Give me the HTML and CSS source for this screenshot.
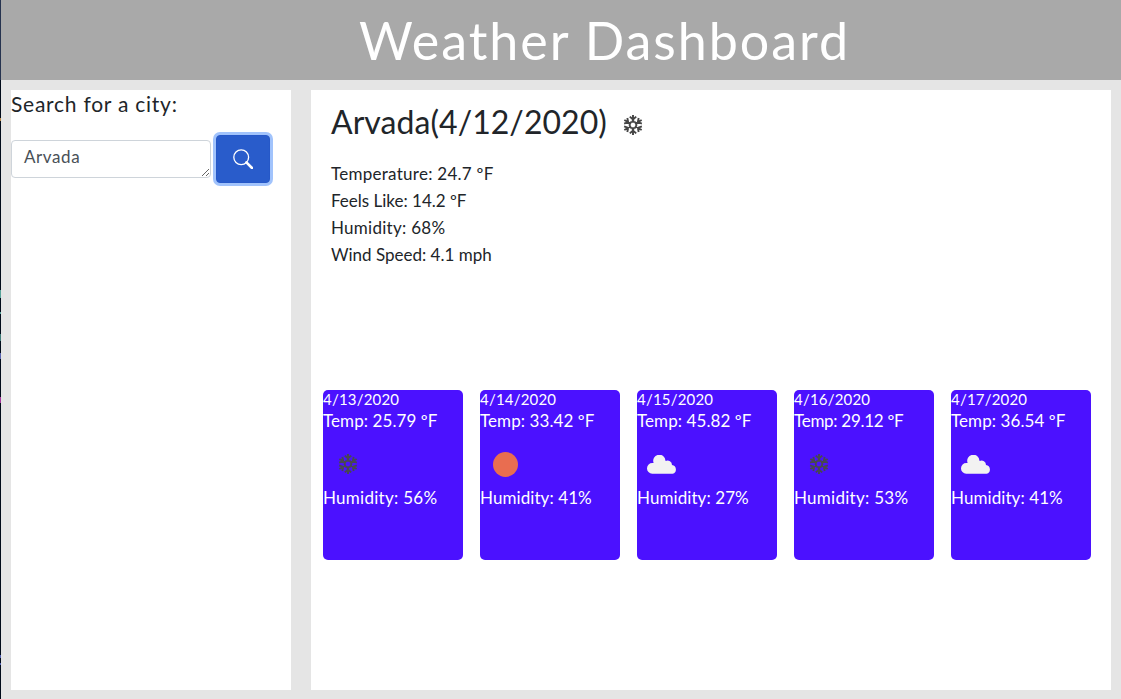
FILE: index.html
```html
<!DOCTYPE html>
<html lang="en">
<head>
<meta charset="utf-8">
<title>Weather Dashboard</title>
<link rel="stylesheet" href="styles.css">
</head>
<body>
<svg class="symbols" aria-hidden="true">
  <symbol id="snow" viewBox="-10 -10 20 20">
    <g id="arms" fill="none" stroke="currentColor" stroke-width="1.9">
      <g id="arm"><path d="M0-2.5V-10M-3.2-8.4 0-5.6 3.2-8.4M-1.8-3.2H1.8"/></g>
      <use href="#arm" transform="rotate(60)"/>
      <use href="#arm" transform="rotate(120)"/>
      <use href="#arm" transform="rotate(180)"/>
      <use href="#arm" transform="rotate(240)"/>
      <use href="#arm" transform="rotate(300)"/>
    </g>
  </symbol>
  <symbol id="cloud" viewBox="0 0 30 19">
    <path fill="#f2f2f2" d="M5.2 18.7A5.2 5.2 0 0 1 5.4 8.1L6.6 8.1A6.2 6.2 0 1 1 18.6 5.9A4.5 4.5 0 0 1 25 10.1A4.4 4.4 0 0 1 25.7 18.7Z"/>
  </symbol>
</svg>
<div class="edge"></div>
<div class="page">
  <header class="banner"><h1>Weather Dashboard</h1></header>
  <main class="content">
    <aside class="search">
      <h2>Search for a city:</h2>
      <form class="search-form">
        <textarea class="city" rows="1">Arvada</textarea>
        <button class="go" type="button" aria-label="Search">
          <svg width="20" height="20" viewBox="0 0 20 20" fill="none" stroke="#fff"><circle cx="8.2" cy="8.2" r="7.4" stroke-width="1.3"/><path d="M13.4 13.4 19 19" stroke-width="2.6" stroke-linecap="round"/></svg>
        </button>
      </form>
    </aside>
    <section class="weather">
      <div class="today">
        <h2 class="place"><span>Arvada(4/12/2020)</span><svg class="snow"><use href="#snow"/></svg></h2>
        <p class="wide">Temperature: 24.7 ºF</p>
        <p>Feels Like: 14.2 ºF</p>
        <p class="wide">Humidity: 68%</p>
        <p>Wind Speed: 4.1 mph</p>
      </div>
      <div class="forecast">
        <article class="day"><h3>4/13/2020</h3><p>Temp: 25.79 ºF</p><div class="icon"><svg class="snow"><use href="#snow"/></svg></div><p class="wide">Humidity: 56%</p></article>
        <article class="day"><h3>4/14/2020</h3><p>Temp: 33.42 ºF</p><div class="icon"><span class="sun"></span></div><p>Humidity: 41%</p></article>
        <article class="day"><h3>4/15/2020</h3><p>Temp: 45.82 ºF</p><div class="icon"><svg class="cloud"><use href="#cloud"/></svg></div><p>Humidity: 27%</p></article>
        <article class="day"><h3>4/16/2020</h3><p class="tight">Temp: 29.12 ºF</p><div class="icon"><svg class="snow"><use href="#snow"/></svg></div><p class="wide">Humidity: 53%</p></article>
        <article class="day"><h3>4/17/2020</h3><p>Temp: 36.54 ºF</p><div class="icon"><svg class="cloud"><use href="#cloud"/></svg></div><p>Humidity: 41%</p></article>
      </div>
    </section>
  </main>
</div>
</body>
</html>
```
FILE: styles.css
```css
* { box-sizing: border-box; }
body { margin: 0; width: 1121px; height: 699px; display: flex; overflow: hidden; background: #e5e5e5; color: #212529; font-family: Lato, sans-serif; }
h1, h2, h3, p { margin: 0; font-weight: 400; white-space: nowrap; }
.symbols { position: absolute; width: 0; height: 0; }
.edge { flex: none; width: 1px; background: linear-gradient(#26334f 0 80px, #010b1a 80px 118px, #b98a4b 118px 121px, #010b1a 121px 290px, #58a399 290px 298px, #010b1a 298px 312px, #58a399 312px 314px, #010b1a 314px 334px, #407b78 334px 341px, #010b1a 341px 353px, #5964ae 353px 359px, #010b1a 359px 397px, #a6379d 397px 403px, #010b1a 403px 655px, #5360b0 655px 658px, #010b1a 658px 663px, #5360b0 663px 665px, #010b1a 665px); }
.page { flex: 1; display: flex; flex-direction: column; }
.banner { height: 80px; background: #a9a9a9; color: #fff; padding-left: 358px; }
.banner h1 { font-size: 52px; line-height: 80px; letter-spacing: 1.95px; }
.content { display: flex; gap: 20px; padding: 10px; }
.search, .weather { height: 600px; background: #fff; }
.search { width: 280px; }
.search h2 { font-size: 21px; line-height: 27px; height: 42px; letter-spacing: .75px; }
.search-form { display: flex; gap: 5px; align-items: center; height: 54px; }
.city { display: block; width: 200px; height: 38px; padding: 4px 12px; border: 1px solid #ced4da; border-radius: 4px; color: #495057; font: 17px/24px Lato, sans-serif; letter-spacing: .6px; resize: both; overflow: hidden; outline: 0; }
.go { width: 54px; height: 48px; padding: 0; border: 1px solid #2658c8; border-radius: 4px; background: #295ccb; box-shadow: 0 0 0 3px #a1c3fc; display: grid; place-items: center; }
.weather { width: 800px; }
.today { height: 300px; padding: 11px 20px; }
.place { display: flex; align-items: center; gap: 16px; height: 42px; margin-bottom: 17px; font-size: 32px; line-height: 42px; letter-spacing: .05px; }
.place .snow { margin-top: 6px; color: #444; }
.snow { display: block; width: 20px; height: 20px; color: #484850; }
.today p { font-size: 17px; line-height: 27px; }
.today .wide, .day .wide { letter-spacing: .27px; }
.forecast { display: flex; gap: 17px; padding-left: 12px; }
.day { width: 140px; height: 170px; background: #4b11ff; border-radius: 5px; color: #fff; }
.day h3 { font-size: 15px; line-height: 18px; height: 20px; letter-spacing: .2px; }
.day p { font-size: 17px; line-height: 21px; letter-spacing: .08px; }
.day .tight { letter-spacing: -.28px; }
.icon { display: grid; place-items: center; width: 50px; height: 56px; padding-top: 10px; }
.sun { width: 25px; height: 25px; border-radius: 50%; background: #e96d50; }
.cloud { width: 30px; height: 19px; }
```
